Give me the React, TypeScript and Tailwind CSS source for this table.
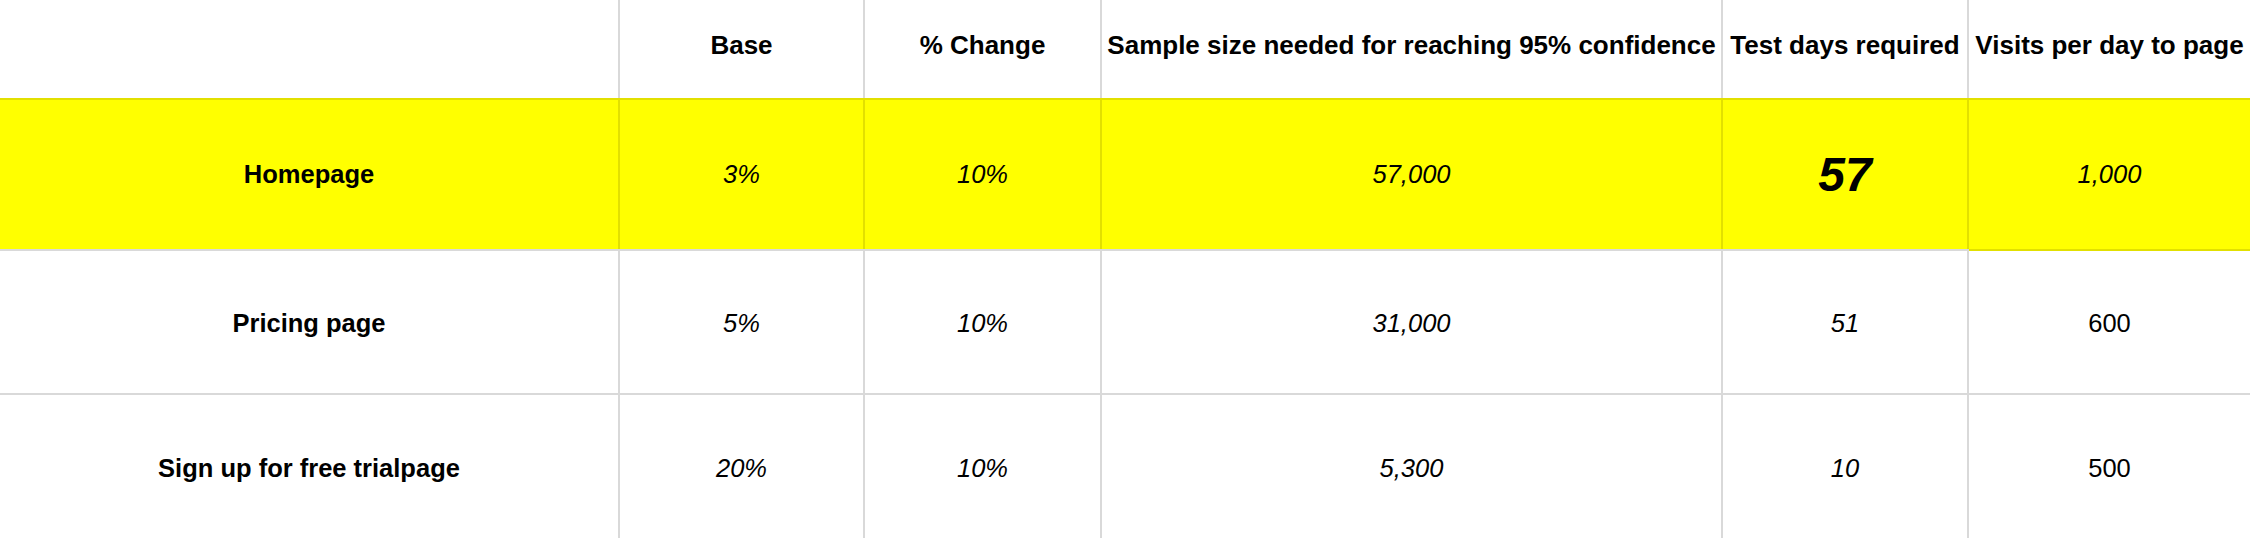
import React from 'react'

type Row = {
    page: string
    base: string
    change: string
    sample: string
    days: string
    visits: string
    highlight?: boolean
}

const rows: Row[] = [
    { page: 'Homepage', base: '3%', change: '10%', sample: '57,000', days: '57', visits: '1,000', highlight: true },
    { page: 'Pricing page', base: '5%', change: '10%', sample: '31,000', days: '51', visits: '600' },
    { page: 'Sign up for free trialpage', base: '20%', change: '10%', sample: '5,300', days: '10', visits: '500' },
]

const headers = ['', 'Base', '% Change', 'Sample size needed for reaching 95% confidence', 'Test days required', 'Visits per day to page']

const cols = 'grid grid-cols-[620px_245px_237px_621px_246px_281px]'

export default function App() {
    return (
        <div className="w-[2250px] h-[538px] overflow-hidden bg-white text-black font-['Liberation_Sans',Arial,sans-serif]">
            {/* header */}
            <div className={`${cols} h-[98px]`}>
                {headers.map((h, i) => (
                    <div
                        key={i}
                        className={`flex items-center justify-center whitespace-nowrap font-bold text-[26px] pb-[8px] ${i < 5 ? 'border-r-2 border-[#d9d9d9]' : ''}`}
                    >
                        {h}
                    </div>
                ))}
            </div>

            {rows.map((r, idx) => {
                const hl = !!r.highlight
                const line = hl ? 'border-[#e2e000]' : 'border-[#d9d9d9]'
                const pad = idx === 1 ? 'pt-[3px]' : ''
                const cell = `flex items-center justify-center whitespace-nowrap text-[25.5px] ${pad} border-r-2 ${line}`
                return (
                    <div
                        key={idx}
                        className={`${cols} ${hl ? 'h-[153px] bg-[#ffff00] border-t-2 border-[#e2e000]' : idx === 1 ? 'h-[144px]' : 'h-[146px]'} ${idx < 2 ? 'border-b-2 border-b-[#d9d9d9]' : ''}`}
                    >
                        <div className={`${cell} font-bold`}>{r.page}</div>
                        <div className={`${cell} italic`}>{r.base}</div>
                        <div className={`${cell} italic`}>{r.change}</div>
                        <div className={`${cell} italic`}>{r.sample}</div>
                        {hl ? (
                            <div className={`${cell} italic font-bold !text-[48px]`}>{r.days}</div>
                        ) : (
                            <div className={`${cell} italic`}>{r.days}</div>
                        )}
                        <div
                            className={`flex items-center justify-center text-[25.5px] ${pad} ${hl ? 'italic border-b-2 border-[#e2e000] -mb-[2px]' : ''}`}
                        >
                            {r.visits}
                        </div>
                    </div>
                )
            })}
        </div>
    )
}
